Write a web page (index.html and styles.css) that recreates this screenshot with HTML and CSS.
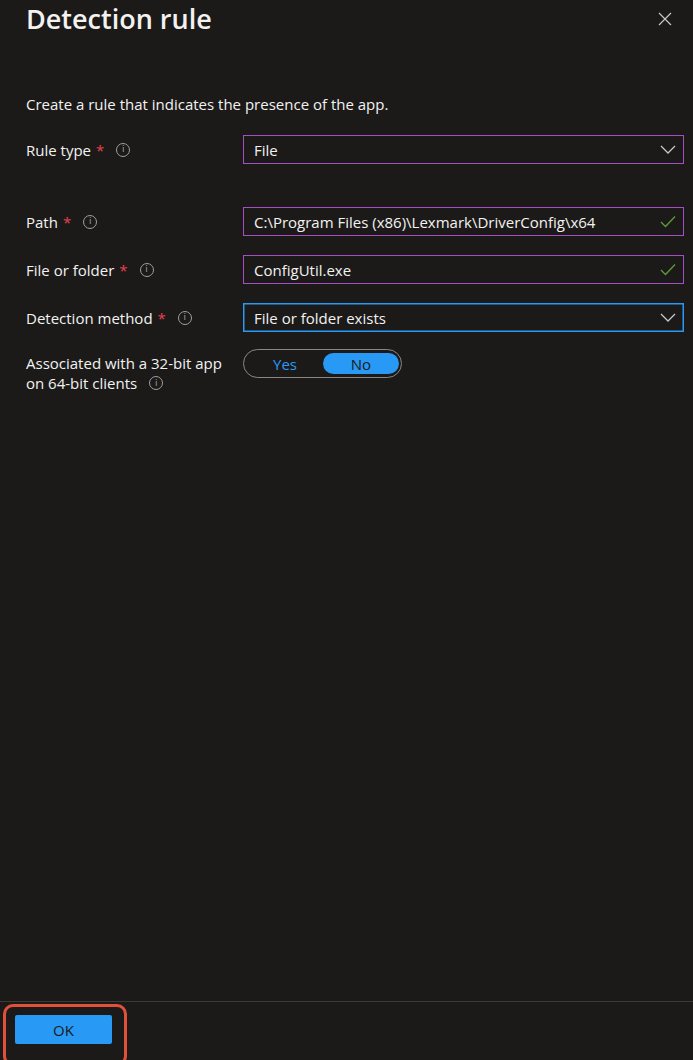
FILE: index.html
```html
<!DOCTYPE html>
<html lang="en">
<head>
<meta charset="utf-8">
<title>Detection rule</title>
<link rel="stylesheet" href="styles.css">
</head>
<body>
<div class="panel">
  <header class="panel-header">
    <h1 class="title">Detection rule</h1>
    <button class="close" aria-label="Close">
      <svg width="14" height="14" viewBox="0 0 14 14"><path d="M1 1 L13 13 M13 1 L1 13" stroke="#c8c6c4" stroke-width="1.2" fill="none"/></svg>
    </button>
  </header>

  <main class="content">
    <p class="intro">Create a rule that indicates the presence of the app.</p>

    <div class="form">
      <div class="row row-first">
        <div class="label">Rule type <span class="req">*</span><span class="info">i</span></div>
        <div class="field select">
          <span class="value">File</span>
          <svg class="chev" width="16" height="9" viewBox="0 0 16 9"><path d="M1 1 L8 8 L15 1" stroke="#c8c6c4" stroke-width="1.3" fill="none"/></svg>
        </div>
      </div>

      <div class="row">
        <div class="label">Path <span class="req">*</span><span class="info">i</span></div>
        <div class="field">
          <span class="value">C:\Program Files (x86)\Lexmark\DriverConfig\x64</span>
          <svg class="check" width="16" height="13" viewBox="0 0 16 13"><path d="M1 7 L5.5 11.5 L15 1.5" stroke="#5c9c3a" stroke-width="1.3" fill="none"/></svg>
        </div>
      </div>

      <div class="row">
        <div class="label">File or folder <span class="req">*</span><span class="info">i</span></div>
        <div class="field">
          <span class="value">ConfigUtil.exe</span>
          <svg class="check" width="16" height="13" viewBox="0 0 16 13"><path d="M1 7 L5.5 11.5 L15 1.5" stroke="#5c9c3a" stroke-width="1.3" fill="none"/></svg>
        </div>
      </div>

      <div class="row">
        <div class="label">Detection method <span class="req">*</span><span class="info">i</span></div>
        <div class="field select focused">
          <span class="value">File or folder exists</span>
          <svg class="chev" width="16" height="9" viewBox="0 0 16 9"><path d="M1 1 L8 8 L15 1" stroke="#c8c6c4" stroke-width="1.3" fill="none"/></svg>
        </div>
      </div>

      <div class="row row-toggle">
        <div class="label label-multi">
          <span class="line">Associated with a 32-bit app</span>
          <span class="line">on 64-bit clients <span class="info">i</span></span>
        </div>
        <div class="toggle">
          <span class="opt">Yes</span>
          <span class="opt on">No</span>
        </div>
      </div>
    </div>
  </main>

  <footer class="footer">
    <div class="highlight">
      <button class="ok">OK</button>
    </div>
  </footer>
</div>
</body>
</html>
```

FILE: styles.css
```css
html, body {
  margin: 0;
  padding: 0;
  background: #1b1a19;
  height: 100%;
}
body {
  font-family: "Open Sans", "Noto Sans", "Liberation Sans", sans-serif;
  color: #f3f2f1;
  font-size: 15px;
  overflow: hidden;
}
.panel {
  height: 1060px;
  display: flex;
  flex-direction: column;
}
.panel-header {
  display: flex;
  justify-content: space-between;
  align-items: flex-start;
  padding: 0 21px 0 26px;
}
.title {
  margin: 0;
  font-size: 27px;
  font-weight: 600;
  line-height: 38px;
  color: #f3f2f1;
}
.close {
  background: none;
  border: 0;
  padding: 0;
  margin-top: 12px;
  width: 14px;
  height: 14px;
  display: block;
}
.close svg { display: block; }
.content {
  flex: 1;
  padding: 0 10px 0 26px;
}
.intro {
  margin: 56px 0 0 0;
  font-size: 15px;
  line-height: 20px;
  color: #f3f2f1;
}
.form {
  display: flex;
  flex-direction: column;
  gap: 19px;
  margin-top: 21px;
}
.row {
  display: grid;
  grid-template-columns: 217px 441px;
  align-items: center;
}
.row-first { margin-bottom: 24px; }
.row-toggle {
  align-items: start;
  margin-top: -2px;
}
.label {
  font-size: 15px;
  line-height: 20px;
  color: #f3f2f1;
  display: flex;
  align-items: center;
}
.label-multi {
  flex-direction: column;
  align-items: flex-start;
  margin-top: 4px;
}
.line {
  display: flex;
  align-items: center;
  height: 20px;
  white-space: nowrap;
}
.req {
  color: #e8414e;
  margin-left: 5px;
  font-size: 15px;
}
.info {
  display: inline-flex;
  align-items: center;
  justify-content: center;
  box-sizing: border-box;
  width: 14px;
  height: 14px;
  border: 1px solid #a19f9d;
  border-radius: 50%;
  font-size: 9px;
  line-height: 1;
  color: #a19f9d;
  margin-left: 12px;
  font-family: "DejaVu Sans", sans-serif;
}
.field {
  box-sizing: border-box;
  height: 29px;
  border: 1px solid #a64fc4;
  display: flex;
  align-items: center;
  justify-content: space-between;
  padding: 0 7px 0 10px;
  font-size: 15px;
}
.field.focused { border-color: #2899f5; box-shadow: inset 0 0 0 0.5px #2899f5; }
.value { color: #f3f2f1; white-space: nowrap; }
.chev, .check { display: block; flex: none; }
.toggle {
  box-sizing: border-box;
  width: 159px;
  height: 29px;
  border: 1px solid #8a8886;
  border-radius: 15px;
  display: grid;
  grid-template-columns: 76px 1fr;
  padding: 3px 2px 3px 3px;
  font-size: 15px;
}
.opt {
  display: flex;
  align-items: center;
  justify-content: center;
  border-radius: 11px;
  color: #2899f5;
}
.opt.on {
  background: #2899f5;
  color: #1b1a19;
}
.footer {
  border-top: 1px solid #3b3a39;
  padding: 2px 0 0 3px;
  height: 59px;
  box-sizing: border-box;
}
.highlight {
  width: 124px;
  height: 62px;
  box-sizing: border-box;
  border: 3px solid #e0503a;
  border-radius: 10px;
  padding: 8px 0 0 9px;
}
.ok {
  width: 97px;
  height: 29px;
  background: #2899f5;
  color: #1b1a19;
  border: 0;
  border-radius: 2px;
  font-family: inherit;
  font-size: 15px;
  padding: 0;
}
```
